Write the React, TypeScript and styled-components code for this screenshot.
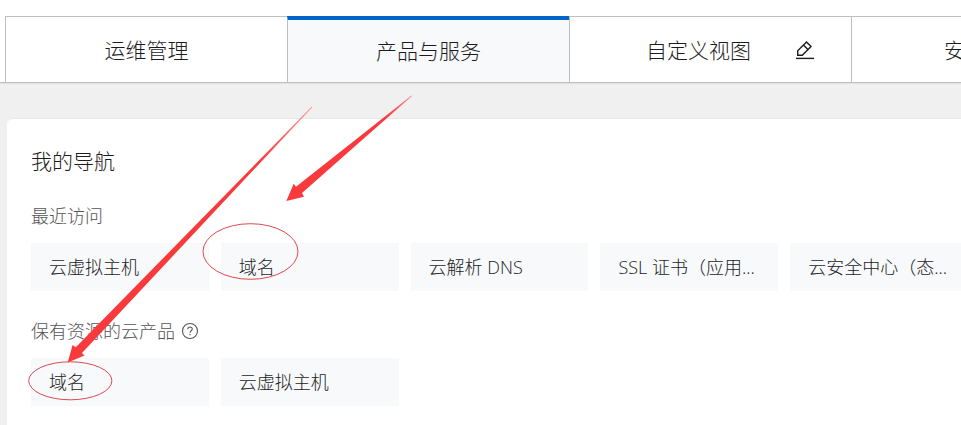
import React from "react";
import styled, { createGlobalStyle } from "styled-components";

const GlobalStyle = createGlobalStyle`
  * {
    box-sizing: border-box;
  }
  body {
    margin: 0;
    background: #f0f0f0;
    color: #1c1c1c;
    font-family: "Open Sans", "Noto Sans CJK SC", sans-serif;
    font-weight: 300;
  }
`;

const Page = styled.div`
  position: relative;
  min-height: 100vh;
  overflow: hidden;
`;

const TabBar = styled.nav`
  display: flex;
  padding: 16px 0 0 5px;
  background: #fff;
  border-bottom: 1px solid #bfbfbf;
  box-shadow: 0 1px 1px #e2e2e2;
`;

const Tab = styled.div<{ $active?: boolean; $inset?: number }>`
  display: flex;
  flex: 0 0 282px;
  align-items: center;
  justify-content: ${(p) => (p.$inset ? "flex-start" : "center")};
  gap: 44px;
  height: 66px;
  padding-left: ${(p) => p.$inset ?? 0}px;
  border-left: 1px solid #bfbfbf;
  border-top: ${(p) => (p.$active ? "4px solid #0064c8" : "1px solid #bfbfbf")};
  background: ${(p) => (p.$active ? "#f7f9fb" : "#fff")};
`;

const TabButton = styled.button`
  padding: 0;
  border: 0;
  background: none;
  color: inherit;
  font: inherit;
  font-size: 21px;
  line-height: 32px;
  cursor: pointer;
`;

const IconButton = styled.button`
  display: inline-flex;
  padding: 0;
  border: 0;
  background: none;
  color: inherit;
  cursor: pointer;
`;

const Card = styled.main`
  min-width: 986px;
  margin: 35px 7px 0;
  padding: 27px 25px 24px 24px;
  border-top: 1px solid #e8e8e8;
  border-radius: 6px 6px 0 0;
  background: #fff;
`;

const Title = styled.h1`
  margin: 0;
  font-size: 21px;
  font-weight: 300;
  line-height: 30px;
`;

const Section = styled.section`
  margin-top: 25px;
`;

const SectionTitle = styled.h2`
  display: flex;
  align-items: center;
  gap: 6px;
  margin: 0 0 12px;
  color: #555;
  font-size: 18px;
  font-weight: 300;
  line-height: 30px;
`;

const TileGrid = styled.div`
  display: grid;
  grid-template-columns: repeat(5, minmax(0, 1fr));
  gap: 12px;
`;

const Tile = styled.a`
  height: 48px;
  padding: 0 18px;
  overflow: hidden;
  background: #f7f9fb;
  color: inherit;
  font-size: 18px;
  line-height: 48px;
  text-decoration: none;
  text-overflow: ellipsis;
  white-space: nowrap;
`;

const Annotations = styled.svg`
  position: absolute;
  top: 0;
  left: 0;
  pointer-events: none;
`;

const EditIcon = () => (
  <svg width="20" height="20" viewBox="0 0 20 20" fill="none" stroke="currentColor" strokeWidth="1.4">
    <path d="M2.7 15.2V10.8L11.5 2L16 6.5L7.3 15.2ZM8.4 5.1L12.9 9.6" />
    <path d="M1 18.4H19" />
  </svg>
);

const HelpIcon = () => (
  <svg width="18" height="18" viewBox="0 0 18 18" fill="none" stroke="currentColor" strokeWidth="1.1">
    <circle cx="9" cy="9" r="7.5" />
    <path d="M6.8 7.3C6.8 4.3 11.3 4.4 11.3 7.1C11.3 8.8 9 8.8 9 10.7M9 12V13.3" />
  </svg>
);

const recent = ["云虚拟主机", "域名", "云解析 DNS", "SSL 证书（应用...", "云安全中心（态..."];
const owned = ["域名", "云虚拟主机"];

export default function App() {
  return (
    <>
      <GlobalStyle />
      <Page>
        <TabBar>
          <Tab>
            <TabButton>运维管理</TabButton>
          </Tab>
          <Tab $active>
            <TabButton aria-current="page">产品与服务</TabButton>
          </Tab>
          <Tab $inset={76}>
            <TabButton>自定义视图</TabButton>
            <IconButton aria-label="编辑">
              <EditIcon />
            </IconButton>
          </Tab>
          <Tab $inset={92}>
            <TabButton>安</TabButton>
          </Tab>
        </TabBar>
        <Card>
          <Title>我的导航</Title>
          <Section>
            <SectionTitle>最近访问</SectionTitle>
            <TileGrid>
              {recent.map((name) => (
                <Tile href="#" key={name}>
                  {name}
                </Tile>
              ))}
            </TileGrid>
          </Section>
          <Section>
            <SectionTitle>
              保有资源的云产品
              <IconButton aria-label="帮助">
                <HelpIcon />
              </IconButton>
            </SectionTitle>
            <TileGrid>
              {owned.map((name) => (
                <Tile href="#" key={name}>
                  {name}
                </Tile>
              ))}
            </TileGrid>
          </Section>
        </Card>
        <Annotations width="420" height="420" viewBox="0 0 420 420" aria-hidden="true">
          <defs>
            <linearGradient id="longTail" gradientUnits="userSpaceOnUse" x1="312" y1="107" x2="260" y2="162">
              <stop offset="0" stopColor="#f83a3c" stopOpacity="0.5" />
              <stop offset="1" stopColor="#f83a3c" />
            </linearGradient>
            <linearGradient id="shortTail" gradientUnits="userSpaceOnUse" x1="411" y1="96" x2="385" y2="118">
              <stop offset="0" stopColor="#f83a3c" stopOpacity="0.6" />
              <stop offset="1" stopColor="#f83a3c" />
            </linearGradient>
          </defs>
          <path d="M312.5 107L82 353L84.5 355.5L67.7 362.5L72.6 345L75.8 347.3L311.8 106.5Z" fill="url(#longTail)" />
          <path d="M412 96L302 193L304 196.8L286.3 201L293.7 183.7L296 186.8L411.5 95.6Z" fill="url(#shortTail)" />
          <g fill="none" stroke="#e0474f" strokeWidth="1">
            <ellipse cx="250.5" cy="251.5" rx="47.5" ry="27.8" />
            <ellipse cx="70.3" cy="380.8" rx="41.6" ry="19" />
          </g>
        </Annotations>
      </Page>
    </>
  );
}
